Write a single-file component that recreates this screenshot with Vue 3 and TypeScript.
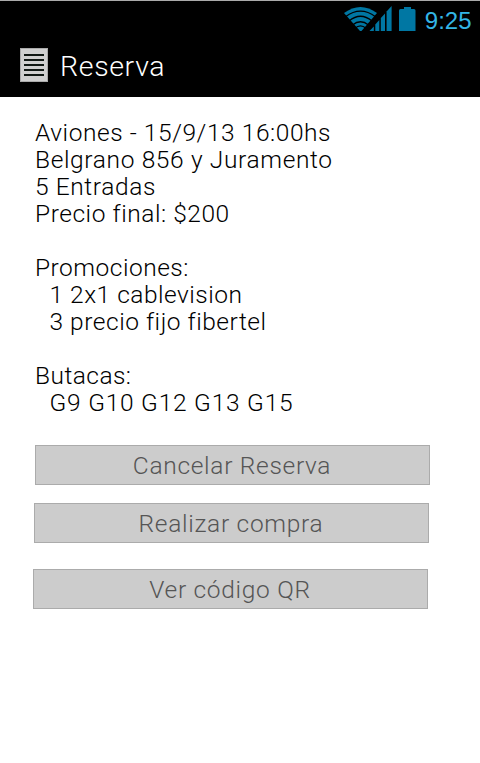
<script setup lang="ts">
interface Line {
  text: string
  spacing: number
  indent?: boolean
}

interface Action {
  label: string
  kind: string
}

const groups: Line[][] = [
  [
    { text: 'Aviones - 15/9/13 16:00hs', spacing: 0.56 },
    { text: 'Belgrano 856 y Juramento', spacing: 0.64 },
    { text: '5 Entradas', spacing: 0.6 },
    { text: 'Precio final: $200', spacing: 0.55 },
  ],
  [
    { text: 'Promociones:', spacing: 0.5 },
    { text: '1 2x1 cablevision', spacing: 0.5, indent: true },
    { text: '3 precio fijo fibertel', spacing: 0.53, indent: true },
  ],
  [
    { text: 'Butacas:', spacing: 0.45 },
    { text: 'G9 G10 G12 G13 G15', spacing: 0.77, indent: true },
  ],
]

const actions: Action[] = [
  { label: 'Cancelar Reserva', kind: 'cancel' },
  { label: 'Realizar compra', kind: 'buy' },
  { label: 'Ver código QR', kind: 'code' },
]
</script>

<template>
  <div class="screen">
    <header class="top">
      <div class="status">
        <svg class="signals" width="73" height="25" viewBox="0 0 73 25">
          <path d="M0 6Q16.500 -6 33 6L17.500 24H16Z" fill="#0077a3" />
          <g fill="none" stroke="#000" stroke-width="1.3">
            <path d="M1.500 9.700Q16.500 -1.500 31.500 9.700" />
            <path d="M5 14Q16.500 4.500 28 14" />
            <path d="M8.500 18Q16.500 11.500 24.500 18" />
            <path d="M11 21.300Q16.500 16.500 22 21.300" />
          </g>
          <path d="M22 25L36 9V0H34.500L36 4L18 25Z" fill="#000" />
          <g fill="#0077a3">
            <path d="M25.500 24L29.800 19.500V24Z" />
            <path d="M31.300 24V17.500L35.300 13V24Z" />
            <path d="M36.800 24V11L41 6.500V24Z" />
            <path d="M42.600 24V4.500L47.600 -1V24Z" />
            <path d="M55 3.500Q55 2 56.500 2H60V0H67V2H70Q71.500 2 71.500 3.500V24H55Z" />
          </g>
        </svg>
        <time class="clock">9:25</time>
      </div>
      <div class="bar">
        <svg class="list-icon" width="28" height="34" viewBox="0 0 28 34">
          <rect x="0.500" y="0.500" width="27" height="33" fill="#d0d0d0" stroke="#aaa" />
          <path d="M4 7H24M4 12H24M4 17H24M4 22H24M4 27H24" stroke="#111814" stroke-width="2" />
        </svg>
        <h1>Reserva</h1>
      </div>
    </header>
    <main>
      <section v-for="(group, g) in groups" :key="g">
        <p
          v-for="line in group"
          :key="line.text"
          :class="{ indent: line.indent }"
          :style="{ letterSpacing: line.spacing + 'px' }"
        >{{ line.text }}</p>
      </section>
      <div class="actions">
        <button v-for="action in actions" :key="action.kind" type="button" :class="action.kind">
          {{ action.label }}
        </button>
      </div>
    </main>
  </div>
</template>

<style>
body {
  background: #fff;
}
</style>

<style scoped>
.screen {
  height: 763px;
  background: #fff;
  font-family: Roboto, sans-serif;
  font-weight: 300;
  overflow: hidden;
}
.top {
  height: 97px;
  box-sizing: border-box;
  background: #000;
  border-top: 1px solid #aaa;
}
.status {
  height: 47px;
  box-sizing: border-box;
  display: flex;
  align-items: flex-start;
  justify-content: flex-end;
  padding: 6px 8.5px 0 0;
}
.signals {
  overflow: visible;
}
.clock {
  margin-left: 8px;
  font: 400 24px/28px "Liberation Sans", sans-serif;
  color: #33b5e5;
}
.bar {
  display: flex;
  align-items: center;
  height: 34px;
  padding-left: 20px;
}
h1 {
  margin: 0 0 0 12px;
  padding-top: 3px;
  font-size: 28.5px;
  line-height: 34px;
  font-weight: 300;
  letter-spacing: 0.65px;
  color: #fff;
}
main {
  padding: 22px 35px 0;
}
section {
  margin-bottom: 27px;
}
p {
  margin: 0;
  font-size: 24.5px;
  line-height: 27px;
  white-space: nowrap;
  color: #000;
}
.indent {
  padding-left: 14.5px;
}
.actions {
  display: flex;
  flex-direction: column;
  padding-top: 2px;
}
button {
  width: 395px;
  height: 40px;
  padding: 2px 1px 0 0;
  border: 1px solid #ababab;
  border-radius: 0;
  background: #ccc;
  font: 300 24.5px/36px Roboto, sans-serif;
  letter-spacing: 0.7px;
  color: #555;
}
.buy {
  margin: 18px 0 26px -1px;
}
.code {
  margin-left: -2px;
}
</style>
